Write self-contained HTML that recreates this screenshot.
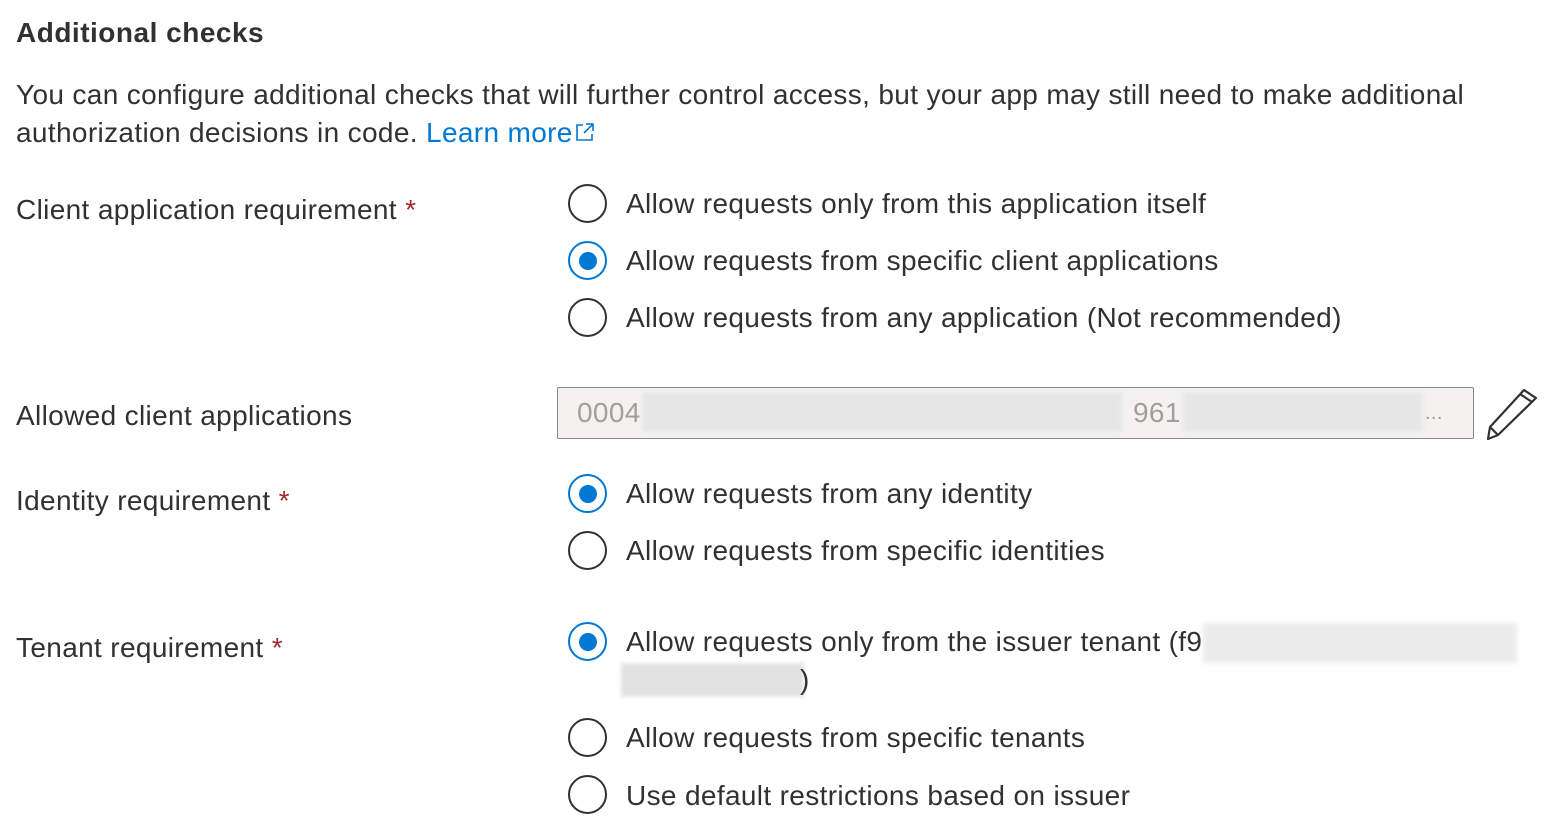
<!DOCTYPE html>
<html><head><style>
body{margin:0;width:1549px;height:829px;background:#fff;font-family:"Liberation Sans",sans-serif;color:#323130;position:relative;overflow:hidden}
.t{position:absolute;white-space:nowrap;font-size:28px;letter-spacing:0.35px;line-height:38px}
.h{font-weight:bold;font-size:28px;letter-spacing:0.5px}
.r{position:absolute;width:35px;height:35px;border:2px solid #323130;border-radius:50%;left:568px}
.r.on{border-color:#0078d4}
.r.on::after{content:"";position:absolute;left:8.5px;top:8.5px;width:18px;height:18px;border-radius:50%;background:#0078d4}
.star{color:#a4262c}
.blur{position:absolute;background:#e6e6e6;filter:blur(2px)}
</style></head><body>
<div class="t h" style="left:16px;top:14px">Additional checks</div>
<div class="t" style="left:16px;top:76px">You can configure additional checks that will further control access, but your app may still need to make additional</div>
<div class="t" style="left:16px;top:114px">authorization decisions in code. <span style="color:#0078d4">Learn more</span><svg width="24" height="22" viewBox="0 0 22 22" style="vertical-align:-1px"><path d="M9 4H3v15h15v-6M12 3h7v7M19 3l-9 9" fill="none" stroke="#0078d4" stroke-width="1.6"/></svg></div>

<div class="t" style="left:16px;top:191px">Client application requirement <span class="star">*</span></div>
<div class="r" style="top:184px"></div><div class="t" style="left:626px;top:185px">Allow requests only from this application itself</div>
<div class="r on" style="top:241px"></div><div class="t" style="left:626px;top:242px">Allow requests from specific client applications</div>
<div class="r" style="top:298px"></div><div class="t" style="left:626px;top:299px">Allow requests from any application (Not recommended)</div>

<div class="t" style="left:16px;top:397px">Allowed client applications</div>
<div style="position:absolute;left:557px;top:387px;width:915px;height:50px;border:1px solid #8a8886;border-radius:2px;background:#f3f2f1"></div>
<div class="t" style="left:577px;top:394px;color:#a19f9d">0004</div>
<div class="blur" style="left:642px;top:392px;width:480px;height:40px"></div>
<div class="t" style="left:1133px;top:394px;color:#a19f9d">961</div>
<div class="blur" style="left:1183px;top:392px;width:240px;height:40px"></div>
<div class="t" style="left:1425px;top:394px;color:#a19f9d;font-size:20px">...</div>
<svg style="position:absolute;left:1486px;top:387px" width="54" height="54" viewBox="0 0 54 54"><path d="M38 3l12 8L12 48l-10 4 2-12z M4 40l8 8 M34 7l12 8" fill="none" stroke="#323130" stroke-width="2.2" stroke-linejoin="round"/></svg>

<div class="t" style="left:16px;top:482px">Identity requirement <span class="star">*</span></div>
<div class="r on" style="top:474px"></div><div class="t" style="left:626px;top:475px">Allow requests from any identity</div>
<div class="r" style="top:531px"></div><div class="t" style="left:626px;top:532px">Allow requests from specific identities</div>

<div class="t" style="left:16px;top:629px">Tenant requirement <span class="star">*</span></div>
<div class="r on" style="top:622px"></div><div class="t" style="left:626px;top:623px">Allow requests only from the issuer tenant (f9</div>
<div class="blur" style="left:1203px;top:623px;width:314px;height:40px;background:#ececec"></div>
<div class="blur" style="left:621px;top:663px;width:183px;height:34px;background:#e2e2e2"></div>
<div class="t" style="left:800px;top:661px">)</div>
<div class="r" style="top:718px"></div><div class="t" style="left:626px;top:719px">Allow requests from specific tenants</div>
<div class="r" style="top:775px"></div><div class="t" style="left:626px;top:777px">Use default restrictions based on issuer</div>
</body></html>
